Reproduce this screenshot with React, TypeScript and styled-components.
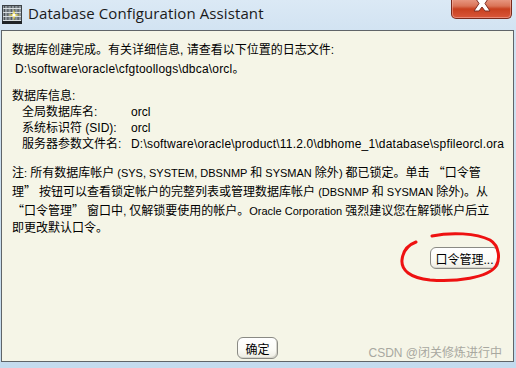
import React from "react";
import styled, { createGlobalStyle } from "styled-components";

const Global = createGlobalStyle`
  html, body { margin: 0; padding: 0; }
  body {
    width: 516px;
    height: 368px;
    overflow: hidden;
    background: #c6dcee;
    font-family: "Liberation Sans", "Noto Sans CJK SC", sans-serif;
  }
`;

const Window = styled.div`
  position: relative;
  width: 516px;
  height: 368px;
  display: flex;
  flex-direction: column;
  background: linear-gradient(to bottom, #dbe9f5 0px, #cfe1f1 40px, #c4dbee 100%);
`;

const TitleBar = styled.div`
  height: 29px;
  display: flex;
  align-items: center;
  padding-left: 2px;
  gap: 6px;
  position: relative;
`;

const TitleText = styled.div`
  font-family: "Open Sans", "Noto Sans", sans-serif;
  font-size: 15px;
  color: #1a1a1a;
  letter-spacing: 0.1px;
  margin-top: -3px;
`;

const CloseButton = styled.div`
  position: absolute;
  top: -2px;
  right: 4px;
  width: 59px;
  height: 20px;
  border: 1px solid #7a2a1c;
  border-top: none;
  border-radius: 0 0 5px 5px;
  background: linear-gradient(to bottom, #eba08c 0%, #da7458 40%, #c8401f 55%, #d9573a 100%);
  box-shadow: inset 0 0 0 1px rgba(255, 200, 190, 0.45);
  display: flex;
  justify-content: center;
  align-items: flex-start;
  overflow: hidden;
`;

const Panel = styled.div`
  margin: 1px 2px 0 1px;
  border: 1px solid #5f6468;
  background: #f5f5e7;
  display: flex;
  flex-direction: column;
  font-size: 12px;
  color: #000;
  padding: 10px 0 0 10px;
  box-sizing: border-box;
  height: 332px;
`;

const HeadBlock = styled.div`
  line-height: 19px;
`;

const PathLine = styled.div`
  padding-left: 3px;
  letter-spacing: 0.2px;
`;

const PathValue = styled.span`
  letter-spacing: 0.2px;
`;

const InfoBlock = styled.div`
  margin-top: 9px;
  line-height: 16px;
`;

const InfoGrid = styled.div`
  display: grid;
  grid-template-columns: 109px auto;
  padding-left: 10px;
`;

const NoteBlock = styled.div`
  margin-top: 11px;
  line-height: 17px;
  white-space: nowrap;
`;

const L = styled.span`
  font-size: 11px;
`;

const Q = styled.span`
  font-family: "Noto Sans CJK SC", sans-serif;
`;

const ButtonRow = styled.div<{ $align: "end" | "center" }>`
  display: flex;
  justify-content: ${(p) => (p.$align === "end" ? "flex-end" : "center")};
  padding-right: ${(p) => (p.$align === "end" ? "14px" : "10px")};
`;

const PassRow = styled(ButtonRow)`
  margin-top: 10px;
`;

const OkRow = styled(ButtonRow)`
  margin-top: auto;
  margin-bottom: 2px;
`;

const Button = styled.button<{ $w: number }>`
  width: ${(p) => p.$w}px;
  height: 22px;
  padding: 0;
  font-family: "Liberation Sans", "Noto Sans CJK SC", sans-serif;
  font-size: 12px;
  color: #000;
  border: 1px solid #8a8a84;
  border-radius: 6px;
  background: linear-gradient(to bottom, #ffffff 0%, #fbfbf6 60%, #ecebe2 100%);
  box-shadow: inset -1px -1px 0 #d6d5cc;
`;

const Ellipse = styled.svg`
  position: absolute;
  left: 396px;
  top: 230px;
  pointer-events: none;
`;

const Watermark = styled.div`
  position: absolute;
  right: 14px;
  bottom: 8px;
  font-family: "Liberation Sans", "Noto Sans CJK SC", sans-serif;
  font-size: 12px;
  color: #a8a8a0;
`;

function AppIcon() {
  return (
    <svg width="20" height="19" viewBox="0 0 20 19">
      <rect x="0" y="0" width="20" height="19" fill="#3c4146" />
      <rect x="1" y="1" width="18" height="17" fill="#8d969c" />
      {[0, 1, 2, 3, 4].map((i) => (
        <rect key={i} x={2 + i * 3.4} y="1" width="1" height="17" fill="#4a5056" />
      ))}
      {[0, 1, 2, 3].map((i) => (
        <rect key={i} x="1" y={3 + i * 4} width="18" height="1" fill="#d7dde0" />
      ))}
      <rect x="0" y="16" width="20" height="3" fill="#202326" />
      <path d="M12 4 L13 9 L18 10 L13 11 L12 16 L11 11 L6 10 L11 9 Z" fill="#f4e04a" />
      <circle cx="12" cy="10" r="1.6" fill="#ffffff" />
    </svg>
  );
}

function CloseX() {
  return (
    <svg width="22" height="17" viewBox="0 0 22 17">
      <path
        d="M3 -2 L8 -2 L11 2 L14 -2 L19 -2 L14 5.5 L19 13 L14 13 L11 9 L8 13 L3 13 L8 5.5 Z"
        fill="#ffffff"
        stroke="#7d2d22"
        strokeWidth="1"
        strokeLinejoin="round"
      />
    </svg>
  );
}

export default function App() {
  return (
    <>
      <Global />
      <Window>
        <TitleBar>
          <AppIcon />
          <TitleText>Database Configuration Assistant</TitleText>
          <CloseButton>
            <CloseX />
          </CloseButton>
        </TitleBar>
        <Panel>
          <HeadBlock>
            <div>数据库创建完成。有关详细信息, 请查看以下位置的日志文件:</div>
            <PathLine>D:\software\oracle\cfgtoollogs\dbca\orcl。</PathLine>
          </HeadBlock>
          <InfoBlock>
            <div>数据库信息:</div>
            <InfoGrid>
              <span>全局数据库名:</span>
              <span>orcl</span>
              <span>系统标识符 (SID):</span>
              <span>orcl</span>
              <span>服务器参数文件名:</span>
              <PathValue>D:\software\oracle\product\11.2.0\dbhome_1\database\spfileorcl.ora</PathValue>
            </InfoGrid>
          </InfoBlock>
          <NoteBlock>
            <div>
              注<L>: </L>所有数据库帐户<L> (SYS, SYSTEM, DBSNMP </L>和<L> SYSMAN </L>除外<L>) </L>都已锁定。单击<L> </L>
              <Q>“</Q>口令管
            </div>
            <div>
              理<Q>”</Q>
              <L> </L>按钮可以查看锁定帐户的完整列表或管理数据库帐户<L> (DBSNMP </L>和<L> SYSMAN </L>除外<L>)</L>。从
            </div>
            <div>
              <Q>“</Q>口令管理<Q>”</Q>
              <L> </L>窗口中<L>, </L>仅解锁要使用的帐户。<L>Oracle Corporation </L>强烈建议您在解锁帐户后立
            </div>
            <div>即更改默认口令。</div>
          </NoteBlock>
          <PassRow $align="end">
            <Button $w={69}>口令管理...</Button>
          </PassRow>
          <OkRow $align="center">
            <Button $w={41}>确定</Button>
          </OkRow>
        </Panel>
        <Ellipse width="112" height="56" viewBox="0 0 112 56">
          <path
            d="M36 6 C55 2 80 3 94 10 C104 16 104 30 100 36 C92 48 60 52 34 50 C14 48 5 40 6 30 C7 20 12 15 20 12"
            fill="none"
            stroke="#ee1111"
            strokeWidth="3"
            strokeLinecap="round"
          />
        </Ellipse>
        <Watermark>CSDN @闭关修炼进行中</Watermark>
      </Window>
    </>
  );
}
